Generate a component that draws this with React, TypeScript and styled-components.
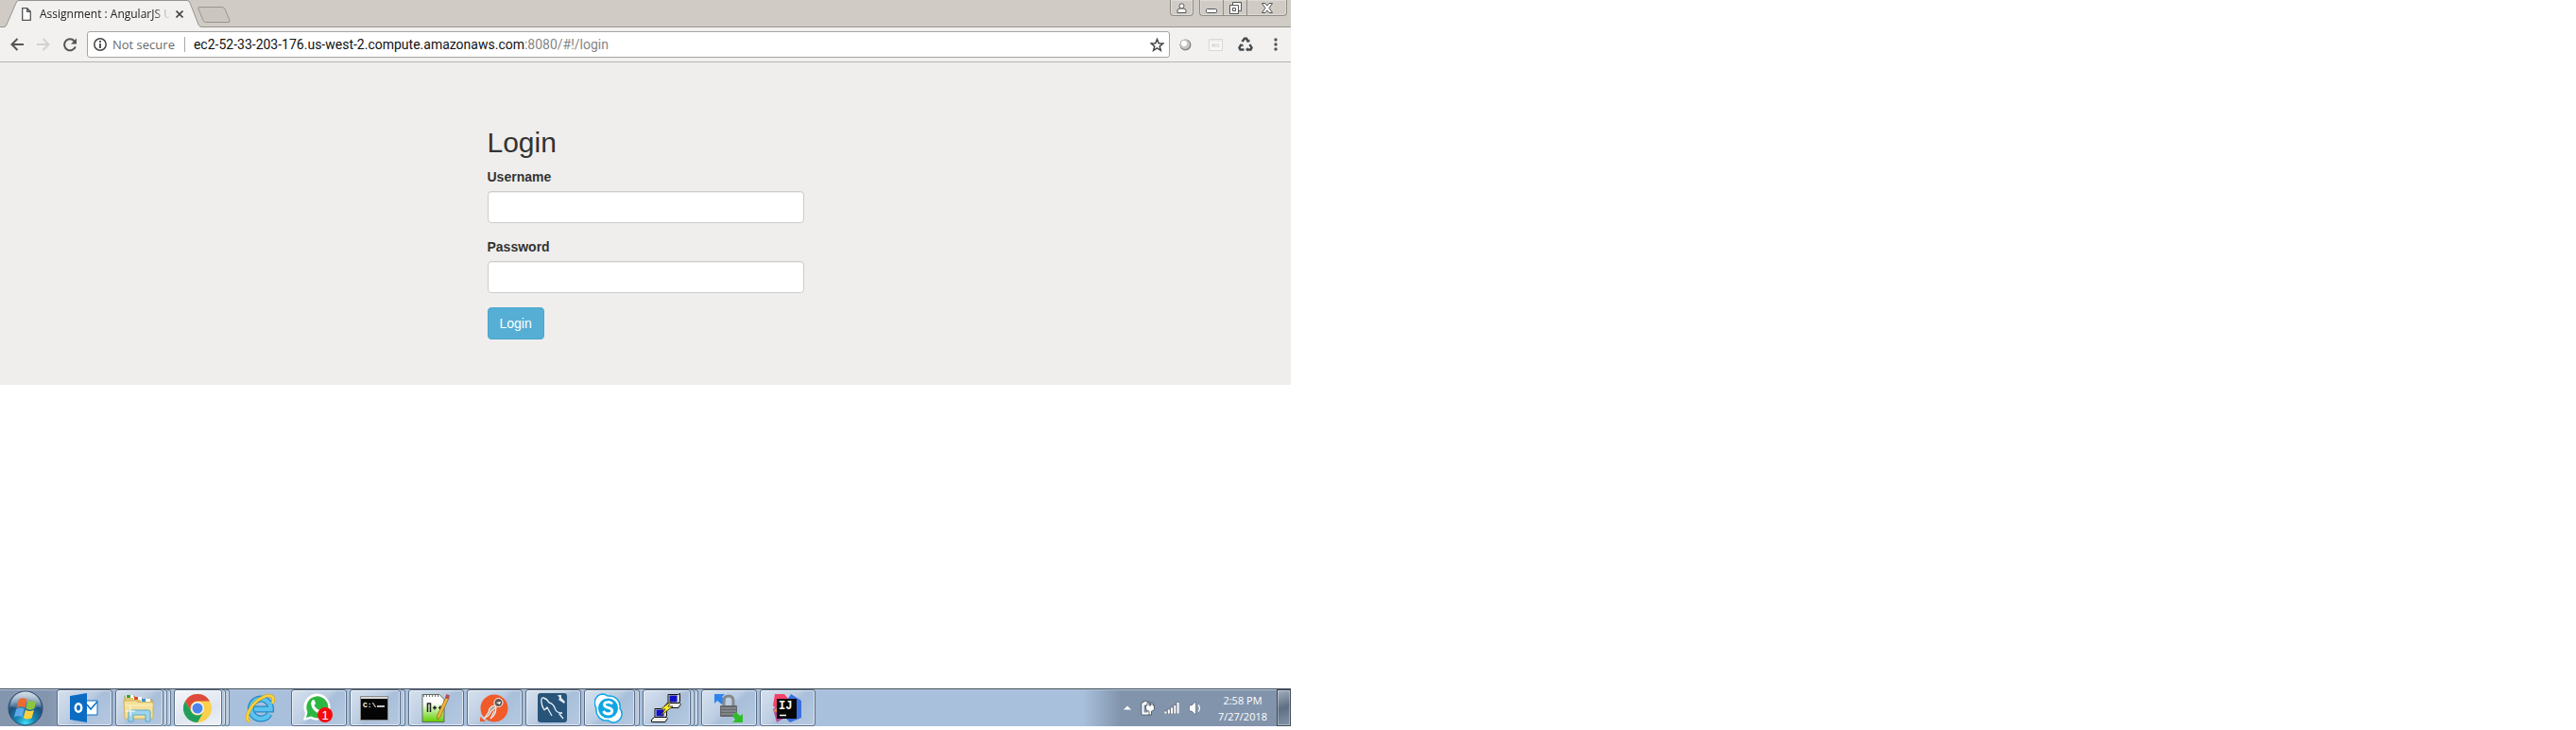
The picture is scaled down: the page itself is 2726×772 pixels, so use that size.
import React from 'react';
import styled, { createGlobalStyle } from 'styled-components';

const ui = '"Open Sans", "Noto Sans", sans-serif';
const sans = '"Liberation Sans", Arial, sans-serif';

const GlobalStyle = createGlobalStyle`
  *, *::before, *::after { box-sizing: border-box; }
  body { margin: 0; background: #fff; font-family: ${ui}; color: #333; }
  button, input { font: inherit; margin: 0; }
  button { cursor: pointer; }
  svg { display: block; flex: none; }
`;

const Desktop = styled.div`
  display: flex;
  flex-direction: column;
  max-width: 1366px;
  min-height: calc(100vh - 4px);
  margin-bottom: 4px;
`;

const TabStrip = styled.header`
  display: flex;
  height: 29px;
  background: #d0ccc5;
  box-shadow: inset 0 -1px #97948f;
`;

const Tabs = styled.div`
  display: flex;
  flex: 1;
  padding-left: 4px;
`;

const Tab = styled.div`
  position: relative;
  display: flex;
  align-items: center;
  width: 210px;
  height: 29px;
  padding: 0 20px 0 19px;
`;

const TabShape = styled.svg`
  position: absolute;
  inset: 0;
`;

const PageIcon = styled.svg`
  position: relative;
`;

const TabTitle = styled.span`
  position: relative;
  flex: 1;
  margin-left: 9px;
  overflow: hidden;
  white-space: nowrap;
  font-size: 12px;
  line-height: 16px;
  color: #222;
  mask-image: linear-gradient(90deg, #000 120px, transparent 138px);
`;

const PlainButton = styled.button`
  position: relative;
  display: flex;
  align-items: center;
  justify-content: center;
  padding: 0;
  border: 0;
  background: none;
`;

const NewTab = styled(PlainButton)`
  align-self: flex-start;
  margin: 7px 0 0 -5px;
`;

const WindowControls = styled.div`
  display: flex;
  gap: 6px;
  padding-right: 4px;
`;

const ControlGroup = styled.div`
  display: flex;
  height: 17px;
  border: 1px solid #8f8c87;
  border-top: 0;
  border-radius: 0 0 4px 4px;
  box-shadow: inset 0 0 0 1px #dedbd6;
`;

const ControlButton = styled(PlainButton)<{ $width: number }>`
  width: ${(p) => p.$width}px;
  & + & { border-left: 1px solid #8f8c87; }
`;

const Toolbar = styled.nav`
  display: flex;
  align-items: center;
  height: 37px;
  padding: 0 6px 0 8px;
  background: #f2f1f0;
  border-bottom: 1px solid #b6b4b3;
`;

const NavButtons = styled.div`
  display: flex;
  gap: 8px;
  margin-right: 8px;
`;

const ToolButton = styled(PlainButton)`
  width: 20px;
  height: 20px;
`;

const Omnibox = styled.div`
  display: flex;
  flex: 1;
  align-items: center;
  height: 28px;
  padding: 0 5px 0 6px;
  background: #fff;
  border: 1px solid #a5a4a3;
  border-radius: 3px;
`;

const Security = styled.span`
  margin-left: 6px;
  padding-right: 10px;
  border-right: 1px solid #a9a9a9;
  font-size: 13px;
  line-height: 16px;
  white-space: nowrap;
  color: #6a6a6a;
`;

const Address = styled.span`
  flex: 1;
  margin-left: 9px;
  font-family: Roboto, ${ui};
  font-size: 14px;
  line-height: 20px;
  white-space: nowrap;
  color: #111;
`;

const Muted = styled.span`
  color: #858585;
`;

const Extensions = styled.div`
  display: flex;
  gap: 12px;
  margin-left: 6px;
`;

const Page = styled.main`
  padding: 68px 16px 48px;
  background: #efeeec;
  font-family: ${sans};
`;

const LoginForm = styled.form`
  max-width: 335px;
  margin: 0 auto;
  font-size: 14px;
  line-height: 20px;
`;

const Title = styled.h1`
  margin: 0 0 10px;
  font-size: 30px;
  font-weight: 400;
  line-height: 33px;
`;

const Field = styled.div`
  margin-bottom: 15px;
`;

const Label = styled.label`
  display: block;
  margin-bottom: 5px;
  font-weight: 700;
`;

const TextInput = styled.input`
  display: block;
  width: 100%;
  height: 34px;
  padding: 6px 12px;
  border: 1px solid #ccc;
  border-radius: 4px;
  background: #fff;
  box-shadow: inset 0 1px 1px rgba(0, 0, 0, 0.075);
`;

const SubmitButton = styled.button`
  display: block;
  padding: 6px 12px;
  border: 1px solid #4ba6cb;
  border-radius: 4px;
  background: #56aed5;
  color: #fff;
`;

const Taskbar = styled.footer`
  display: flex;
  align-items: stretch;
  height: 40px;
  margin-top: auto;
  border-top: 1px solid #3f4c5a;
  background: linear-gradient(90deg, #8495ae 0, #8495ae 50px, #a8c0dc 130px, #a8c0dc calc(100% - 220px), #8294ac calc(100% - 180px));
  box-shadow: inset 0 1px #b9c9dc;
`;

const StartButton = styled(PlainButton)`
  width: 60px;
  padding-right: 6px;
`;

const TaskList = styled.div`
  display: flex;
  flex: 1;
  gap: 3px;
`;

const Task = styled.div`
  display: flex;
  width: 59px;
`;

const TaskButton = styled(PlainButton)<{ $active?: boolean; $pinned?: boolean }>`
  flex: 1;
  padding-right: 2px;
  ${(p) =>
    p.$pinned
      ? ''
      : `
    border: 1px solid #5b6d85;
    border-radius: 3px;
    box-shadow: inset 0 0 0 1px rgba(255, 255, 255, 0.55);
    background: ${
      p.$active
        ? 'linear-gradient(160deg, #f4f7fb, #dde5ef 60%, #eef3f8)'
        : 'linear-gradient(135deg, #d6e1ee 0, #bccde2 45%, #a9bfda 55%, #b5c9e0)'
    };
  `}
`;

const StackEdge = styled.span<{ $width: number }>`
  width: ${(p) => p.$width}px;
  border: 1px solid #62748c;
  border-left: 0;
  border-radius: 0 3px 3px 0;
  background: #b4c7de;
  box-shadow: inset -1px 0 rgba(255, 255, 255, 0.5);
`;

const Tray = styled.div`
  display: flex;
  align-items: center;
`;

const TrayIcons = styled.div`
  display: flex;
  align-items: center;
  gap: 10px;
  margin-right: 16px;
`;

const Clock = styled.time`
  display: block;
  width: 54px;
  margin-right: 9px;
  font-size: 11px;
  line-height: 17px;
  text-align: center;
  white-space: nowrap;
  color: #fff;
`;

const ShowDesktop = styled(PlainButton)`
  align-self: stretch;
  width: 15px;
  border: 1px solid #3f4a58;
  background: linear-gradient(160deg, #a3afbd, #5f6f83 50%, #8493a6);
  box-shadow: inset 0 0 0 1px rgba(255, 255, 255, 0.35);
`;

const StartIcon = () => (
  <svg width="38" height="38" viewBox="0 0 38 38">
    <defs>
      <radialGradient id="orb" cx=".5" cy=".95" r=".8">
        <stop offset="0" stopColor="#3fe0f5" />
        <stop offset=".35" stopColor="#1686b4" />
        <stop offset=".75" stopColor="#1f4f7c" />
        <stop offset="1" stopColor="#5f83a3" />
      </radialGradient>
      <linearGradient id="shine" x1="0" y1="0" x2="0" y2="1">
        <stop offset="0" stopColor="#fff" stopOpacity=".75" />
        <stop offset="1" stopColor="#fff" stopOpacity=".1" />
      </linearGradient>
    </defs>
    <circle cx="19" cy="19" r="18" fill="url(#orb)" stroke="#274a6b" />
    <path d="M3 17a16 15.500 0 0 1 32 0q-16 5-32 0z" fill="url(#shine)" />
    <path d="M12 9.500q4.500-2.500 8.500 0l-2.300 9q-4-2.500-8.700 0z" fill="#ee6a31" />
    <path d="M21.700 10.500q4.300 2.500 9 0l-2.300 8.800q-4.500 2.700-9 0z" fill="#8cc63e" />
    <path d="M9.200 19.800q4.500-2.600 8.600 0l-2.300 8.700q-4.200-2.600-8.600 0z" fill="#5ea9e8" />
    <path d="M19 20.700q4.500 2.600 9 0l-2.300 8.600q-4.700 2.600-9 0z" fill="#fbd13f" />
  </svg>
);

const OutlookIcon = () => (
  <svg width="30" height="32" viewBox="0 0 30 32">
    <path d="M16 8h13v15H16z" fill="#fff" stroke="#0b6fc6" />
    <path d="M18 12l4 5 7-8" fill="none" stroke="#0b6fc6" strokeWidth="1.500" />
    <path d="M0 3l18-3v31L0 28z" fill="#0b6cc4" />
    <ellipse cx="9" cy="15.500" rx="3.200" ry="4.200" fill="none" stroke="#fff" strokeWidth="2.500" />
  </svg>
);

const FolderIcon = () => (
  <svg width="34" height="32" viewBox="0 0 34 32">
    <path d="M2 3h10l1 2h7l1 2h10v9H2z" fill="#e6ca6c" stroke="#b99c49" />
    <path d="M3 2h8v3H3z" fill="#fff" />
    <path d="M4 2h4v3H4z" fill="#3a9f3c" />
    <path d="M11 4h9v3h-9z" fill="#fff" />
    <path d="M12 4h4v3h-4z" fill="#d84a2e" />
    <path d="M19 6h10v3H19z" fill="#fff" />
    <path d="M20 6h4v3h-4z" fill="#3b90d6" />
    <path d="M1 8h13l2 1.500h16V27H2z" fill="#f4e19a" stroke="#cdb361" />
    <path d="M2 13h30" stroke="#fbf1c2" />
    <path d="M6 30V20q0-2 2-2h19q2 0 2 2v10h-5v-7H11v7z" fill="#9ed4ec" stroke="#5ba8c9" />
    <path d="M8 14v10M3 19h10" stroke="#fff" />
  </svg>
);

const ChromeIcon = () => (
  <svg width="30" height="30" viewBox="0 0 30 30">
    <circle cx="15" cy="15" r="15" fill="#fbd04b" />
    <path d="M2 7.500A15 15 0 0 1 28 7.500H15A7.500 7.500 0 0 0 8.500 18.700z" fill="#de4b3d" />
    <path d="M2 7.500A15 15 0 0 0 15 30l6.500-11.300A7.500 7.500 0 0 1 8.500 18.700z" fill="#1f9f5c" />
    <circle cx="15" cy="15" r="7" fill="#f5f5f5" />
    <circle cx="15" cy="15" r="5.500" fill="#4a86ee" />
  </svg>
);

const ExplorerIcon = () => (
  <svg width="32" height="32" viewBox="0 0 32 32">
    <path d="M26 22a10.500 10.500 0 1 1 1.500-5H10" fill="none" stroke="#2387c8" strokeWidth="7" />
    <path d="M26 22a10.500 10.500 0 1 1 1.500-5H10" fill="none" stroke="#5cc3ef" strokeWidth="4.500" />
    <path d="M5 30C-2 26 8 10 18 5q9-5 12 0 1 2-1 6" fill="none" stroke="#c89a18" strokeWidth="3.500" />
    <path d="M5 30C-2 26 8 10 18 5q9-5 12 0 1 2-1 6" fill="none" stroke="#f8d53f" strokeWidth="2.500" />
  </svg>
);

const WhatsappIcon = () => (
  <svg width="32" height="32" viewBox="0 0 32 32">
    <path d="M0 29l2-8A14 14 0 1 1 8 27z" fill="#fff" />
    <path d="M3 26l1.500-6A11.500 11.500 0 1 1 8.500 24.500z" fill="#2db742" />
    <path d="M9 8q2-2 3 0l1 3-1.500 2q2 4 6 5l2-2 3.500 2q0 4-4 4Q9 20 8 11z" fill="#fff" />
    <circle cx="23" cy="23" r="8" fill="#f20d0d" />
    <text x="23" y="28" fill="#fff" fontFamily="Liberation Sans, sans-serif" fontSize="13" textAnchor="middle">1</text>
  </svg>
);

const ConsoleIcon = () => (
  <svg width="30" height="26" viewBox="0 0 30 26">
    <path d="M.5.5h29v25H.5z" fill="#050505" stroke="#8a8a8a" />
    <path d="M1 1h28v2H1z" fill="#d8d8d8" />
    <text x="3" y="12" fill="#fff" fontFamily="Liberation Mono, monospace" fontSize="8" fontWeight="700">C:\</text>
    <path d="M18 11h8" stroke="#fff" strokeWidth="1.500" />
  </svg>
);

const NotepadIcon = () => (
  <svg width="32" height="32" viewBox="0 0 32 32">
    <defs>
      <linearGradient id="pad" x1="0" y1="0" x2="0" y2="1">
        <stop offset=".3" stopColor="#fff" />
        <stop offset="1" stopColor="#5fce00" />
      </linearGradient>
    </defs>
    <path d="M2 1.500h18l5 5v24H2z" fill="url(#pad)" stroke="#5f6a5a" />
    <path d="M3 3h17" stroke="#777" strokeWidth="2" strokeDasharray="1 2" />
    <path d="M7.500 20v-9h3v9M13 15.500h4M15 13.500v4M19 15.500h4M21 13.500v4" fill="none" stroke="#222" strokeWidth="1.500" />
    <path d="M27 4l3 1-9 20-3 3-.5-4z" fill="#f0b634" stroke="#8a6420" strokeWidth=".7" />
    <path d="M27.500 1l3.500 1.500-1.500 4-3.500-1.500z" fill="#b34e51" />
  </svg>
);

const PostmanIcon = () => (
  <svg width="30" height="30" viewBox="0 0 30 30">
    <circle cx="15" cy="15" r="14.500" fill="#f15a29" />
    <path d="M0 24l6 5H0z" fill="#f15a29" />
    <path d="M16 12q-6 0-7 7l-5 7q7-3 8-8 4-2 5-5zM15 18l-4 8q6-3 6-12" fill="#b5aca8" stroke="#fff" />
    <circle cx="19.500" cy="9" r="4.500" fill="#5d5552" stroke="#fff" />
    <path d="M22 8l-5 1 4 2z" fill="#fff" />
  </svg>
);

const DolphinIcon = () => (
  <svg width="31" height="31" viewBox="0 0 31 31">
    <rect width="31" height="31" rx="3" fill="#285479" />
    <path d="M7 18C3 12 3 4 6 5q4 1 6 5 5 1 7 8 2 3 7 3l-3 1 4 5M7 18l3-3 5 9" fill="none" stroke="#e6eef4" strokeWidth="1.300" />
    <path d="M21 2l2 3-1 2 6 4 1-2-4-4V2z" fill="#dfe8ef" />
  </svg>
);

const SkypeIcon = () => (
  <svg width="30" height="32" viewBox="0 0 30 32">
    <path d="M8 1q4 0 6 2c9-1 14 6 13 13 5 7 0 15-7 15q-3 0-5-2C6 30 1 23 2 16-2 9 2 2 8 1z" fill="#fff" stroke="#0fa6e4" strokeWidth="1.500" />
    <circle cx="14.500" cy="16" r="10.500" fill="#0fa6e4" />
    <path d="M19 11.500q-2-2.500-5-2-4 .5-3.500 3 .3 2 4 2.800 4.500 1 4.300 3.700-.3 3-4.300 3-3.500 0-5-3" fill="none" stroke="#fff" strokeWidth="2.800" />
  </svg>
);

const PuttyIcon = () => (
  <svg width="32" height="32" viewBox="0 0 32 32">
    {[
      [14, 0],
      [0, 15],
    ].map(([x, y]) => (
      <g key={x} transform={`translate(${x} ${y})`} stroke="#111">
        <path d="M4 1.500h10.500l2-1V9l-2 2H4z" fill="#d9d7cd" />
        <path d="M5.500 2.500h8v7h-8z" fill="#1010c8" stroke="none" />
        <path d="M.5 13l3-2.500h13l1 1-2.500 4H.5z" fill="#efeee6" />
      </g>
    ))}
    <path d="M22 8L10 17h5l-5 7 13-10h-5z" fill="#ffea1a" stroke="#222" strokeWidth=".7" />
  </svg>
);

const LockIcon = () => (
  <svg width="32" height="32" viewBox="0 0 32 32">
    <path d="M1 1h11L9 4l4 4-4 4-5-4-3 3z" fill="#2f84ea" />
    <path d="M11 14V8q0-5 5-5t5 5v6" fill="none" stroke="#85898d" strokeWidth="3" />
    <rect x="7" y="13" width="18" height="12" rx="1" fill="#63676b" />
    <path d="M8 16h16M8 19h16M8 22h16" stroke="#a0a4a8" />
    <path d="M31 31H20l3-3-3-4 4-4 4 4 3-2z" fill="#31bd2b" />
  </svg>
);

const IdeaIcon = () => (
  <svg width="32" height="32" viewBox="0 0 32 32">
    <path d="M3 1h10l5 6-11 13L1 13z" fill="#f6416c" />
    <path d="M1 17l6-4 8 12-10 6z" fill="#b74b9c" />
    <path d="M20 1l11 7v18l-12 5-8-8L15 9z" fill="#3b6fe0" />
    <path d="M1 19l5-4v5z" fill="#f7913d" />
    <path d="M5 6h21v21H5z" fill="#060606" />
    <text x="7" y="17" fill="#fff" fontFamily="Liberation Mono, monospace" fontSize="12" fontWeight="700">IJ</text>
    <path d="M8 23.500h7" stroke="#fff" strokeWidth="1.500" />
  </svg>
);

type TaskItem = { name: string; icon: React.ReactNode; stack?: number[]; active?: boolean; pinned?: boolean };

const tasks: TaskItem[] = [
  { name: 'Outlook', icon: <OutlookIcon /> },
  { name: 'File Explorer', icon: <FolderIcon />, stack: [4, 4] },
  { name: 'Chrome', icon: <ChromeIcon />, stack: [4, 4], active: true },
  { name: 'Internet Explorer', icon: <ExplorerIcon />, pinned: true },
  { name: 'WhatsApp', icon: <WhatsappIcon /> },
  { name: 'Command Prompt', icon: <ConsoleIcon />, stack: [5] },
  { name: 'Notepad++', icon: <NotepadIcon /> },
  { name: 'Postman', icon: <PostmanIcon /> },
  { name: 'MySQL Workbench', icon: <DolphinIcon /> },
  { name: 'Skype', icon: <SkypeIcon />, stack: [5] },
  { name: 'PuTTY', icon: <PuttyIcon />, stack: [4, 4] },
  { name: 'WinSCP', icon: <LockIcon /> },
  { name: 'IntelliJ IDEA', icon: <IdeaIcon /> },
];

export default function App() {
  return (
    <>
      <GlobalStyle />
      <Desktop>
        <TabStrip>
          <Tabs>
            <Tab>
              <TabShape width="210" height="29" viewBox="0 0 210 29">
                <path d="M0 29Q2 28.500 3 26L13 3Q14 .5 16 .5H194Q196 .5 197 3L206 26Q207 28.500 210 29z" fill="#f2f1f0" />
                <path d="M0 28.500Q2 28.500 3 26L13 3Q14 .5 16 .5H194Q196 .5 197 3L206 26Q207 28.500 210 28.500" fill="none" stroke="#97948f" />
              </TabShape>
              <PageIcon width="10" height="14" viewBox="0 0 10 14">
                <path d="M.7.7h5l3.600 3.600v9H.7zM5.700.7v3.600h3.600" fill="#fff" stroke="#555" strokeWidth="1.300" />
              </PageIcon>
              <TabTitle>Assignment : AngularJS UI</TabTitle>
              <PlainButton type="button" aria-label="Close tab">
                <svg width="8" height="8" viewBox="0 0 8 8">
                  <path d="M.5.5l7 7M7.500.5l-7 7" stroke="#444" strokeWidth="1.600" />
                </svg>
              </PlainButton>
            </Tab>
            <NewTab type="button" aria-label="New tab">
              <svg width="35" height="17" viewBox="0 0 35 17">
                <path d="M2 .5h24q2 0 3 2l5 12q.5 2-1 2H9q-2 0-3-2L1 2.500Q.3.5 2 .5z" fill="#cbc7c0" stroke="#98958f" />
              </svg>
            </NewTab>
          </Tabs>
          <WindowControls>
            <ControlGroup>
              <ControlButton type="button" aria-label="Profile" $width={23}>
                <svg width="11" height="11" viewBox="0 0 11 11" fill="#fff" stroke="#555">
                  <path d="M1 10.500V8q0-2 3-2h3q3 0 3 2v2.500z" />
                  <circle cx="5.500" cy="3.300" r="2.500" />
                </svg>
              </ControlButton>
            </ControlGroup>
            <ControlGroup>
              <ControlButton type="button" aria-label="Minimize" $width={24}>
                <svg width="12" height="12" viewBox="0 0 12 12">
                  <rect x=".5" y="7.500" width="11" height="4" rx="1" fill="#fff" stroke="#555" />
                </svg>
              </ControlButton>
              <ControlButton type="button" aria-label="Restore" $width={25}>
                <svg width="13" height="13" viewBox="0 0 13 13" fill="#fff" stroke="#555">
                  <path d="M3.500.5h9v9h-9z" />
                  <path d="M.5 3.500h9v9h-9z" />
                  <path d="M3.500 6.500h3v3h-3z" />
                </svg>
              </ControlButton>
              <ControlButton type="button" aria-label="Close" $width={42}>
                <svg width="12" height="11" viewBox="0 0 12 11">
                  <path d="M.5.5h3.500l2 2.500 2-2.500h3.500L8 5.500l3.500 5H8L6 8l-2 2.500H.5l3.500-5z" fill="#fff" stroke="#555" />
                </svg>
              </ControlButton>
            </ControlGroup>
          </WindowControls>
        </TabStrip>

        <Toolbar aria-label="Browser">
          <NavButtons>
            <ToolButton type="button" aria-label="Back">
              <svg width="14" height="14" viewBox="0 0 14 14">
                <path d="M14 7H1.500M7.500 1L1.500 7l6 6" fill="none" stroke="#555" strokeWidth="2" />
              </svg>
            </ToolButton>
            <ToolButton type="button" aria-label="Forward">
              <svg width="14" height="14" viewBox="0 0 14 14">
                <path d="M0 7h12.500M6.500 1l6 6-6 6" fill="none" stroke="#d2d1d0" strokeWidth="2" />
              </svg>
            </ToolButton>
            <ToolButton type="button" aria-label="Reload">
              <svg width="15" height="15" viewBox="0 0 15 15">
                <path d="M12.800 9.300A6 6 0 1 1 11.500 3.200" fill="none" stroke="#555" strokeWidth="2" />
                <path d="M14 .5v6H8z" fill="#555" />
              </svg>
            </ToolButton>
          </NavButtons>
          <Omnibox>
            <svg width="14" height="14" viewBox="0 0 14 14">
              <circle cx="7" cy="7" r="6.200" fill="none" stroke="#444" strokeWidth="1.500" />
              <path d="M7 3v2M7 6v5" stroke="#444" strokeWidth="1.800" />
            </svg>
            <Security>Not secure</Security>
            <Address>
              ec2-52-33-203-176.us-west-2.compute.amazonaws.com<Muted>:8080/#!/login</Muted>
            </Address>
            <PlainButton type="button" aria-label="Bookmark this page">
              <svg width="15" height="15" viewBox="0 0 15 15">
                <path d="M7.500 1.500l1.700 4.200 4.500.3-3.500 2.900 1.200 4.400-3.900-2.400-3.900 2.400 1.200-4.400L1.300 6l4.500-.3z" fill="#fff" stroke="#444" strokeWidth="1.500" />
              </svg>
            </PlainButton>
          </Omnibox>
          <Extensions>
            <ToolButton type="button" aria-label="Extension">
              <svg width="13" height="13" viewBox="0 0 13 13">
                <circle cx="6.500" cy="6.500" r="6" fill="#8b8884" />
                <circle cx="6" cy="6" r="5" fill="#c9c7c4" />
                <circle cx="5" cy="5" r="3" fill="#fff" />
              </svg>
            </ToolButton>
            <ToolButton type="button" aria-label="HTTP client">
              <svg width="15" height="13" viewBox="0 0 15 13">
                <path d="M.5.5h14v12H.5z" fill="#f7f7f6" stroke="#d9d8d7" />
                <path d="M1 2h13" stroke="#e2e1e0" />
                <path d="M4 5v4M4 7h2M6 5v4M8 5v4M11.500 5.500h-1.500v3h1.500" fill="none" stroke="#d2d1d0" />
              </svg>
            </ToolButton>
            <ToolButton type="button" aria-label="Recycle">
              <svg width="16" height="16" viewBox="0 0 16 16" fill="none" stroke="#454a4e" strokeWidth="2.500">
                <path d="M4.500 5L7 1.800h2L11 5M12.500 8l2 3.500-1 2H9.500M6.500 13.500h-4l-1-2L3.500 8" />
                <path d="M9 5.500h3.500V2.500zM10.500 11v4.500L8 13.300zM1.500 8l3.500-.5 1 3z" fill="#454a4e" stroke="none" />
              </svg>
            </ToolButton>
            <ToolButton type="button" aria-label="Menu">
              <svg width="4" height="14" viewBox="0 0 4 14" fill="#555">
                <circle cx="2" cy="2" r="1.700" />
                <circle cx="2" cy="7" r="1.700" />
                <circle cx="2" cy="12" r="1.700" />
              </svg>
            </ToolButton>
          </Extensions>
        </Toolbar>

        <Page>
          <LoginForm onSubmit={(e) => e.preventDefault()}>
            <Title>Login</Title>
            <Field>
              <Label htmlFor="username">Username</Label>
              <TextInput id="username" type="text" />
            </Field>
            <Field>
              <Label htmlFor="password">Password</Label>
              <TextInput id="password" type="password" />
            </Field>
            <SubmitButton type="submit">Login</SubmitButton>
          </LoginForm>
        </Page>

        <Taskbar>
          <StartButton type="button" aria-label="Start">
            <StartIcon />
          </StartButton>
          <TaskList>
            {tasks.map((t) => (
              <Task key={t.name}>
                <TaskButton type="button" aria-label={t.name} $active={t.active} $pinned={t.pinned}>
                  {t.icon}
                </TaskButton>
                {t.stack?.map((w, i) => <StackEdge key={i} $width={w} />)}
              </Task>
            ))}
          </TaskList>
          <Tray>
            <TrayIcons>
              <svg width="8" height="5" viewBox="0 0 8 5">
                <path d="M0 4.500L4 .5l4 4z" fill="#fff" />
              </svg>
              <svg width="15" height="16" viewBox="0 0 15 16">
                <path d="M1 2h2V.7h5V2h2v13H1z" fill="#fff" stroke="#4a5666" strokeWidth=".8" />
                <path d="M3.500 4.500h4v8h-4z" fill="#8090a6" />
                <path d="M5.500 5H7V2h2v3h2V2h2v3h1.500v4q-1 2-3 2.200V15h-2.500v-3.800Q5.500 11 5.500 8z" fill="#fff" stroke="#3d4857" strokeWidth=".8" />
              </svg>
              <svg width="16" height="13" viewBox="0 0 16 13" fill="#fff" stroke="#4a5666" strokeWidth=".6">
                <path d="M0 10h3v3H0zM3.300 8h3v5h-3zM6.600 6h3v7h-3zM9.900 3.500h3V13h-3zM13 .5h3V13h-3z" />
              </svg>
              <svg width="14" height="14" viewBox="0 0 14 14">
                <path d="M.5 4H3l4.500-4v14L3 10H.5z" fill="#fff" stroke="#4a5666" strokeWidth=".6" />
                <path d="M10 3.500q3 3.500 0 7" fill="none" stroke="#fff" strokeWidth="1.200" />
              </svg>
            </TrayIcons>
            <Clock dateTime="2018-07-27T14:58">
              2:58 PM
              <br />
              7/27/2018
            </Clock>
            <ShowDesktop type="button" aria-label="Show desktop" />
          </Tray>
        </Taskbar>
      </Desktop>
    </>
  );
}
